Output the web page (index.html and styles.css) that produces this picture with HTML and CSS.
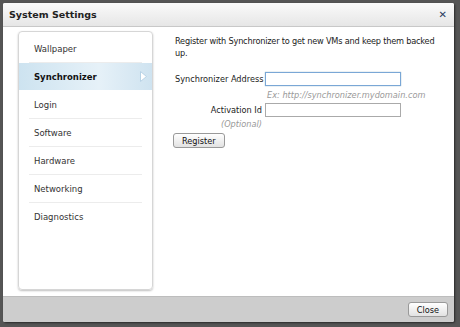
FILE: index.html
```html
<!DOCTYPE html>
<html>
<head>
<meta charset="utf-8">
<link rel="stylesheet" href="styles.css">
</head>
<body>
<div class="dialog">
  <div class="titlebar">
    <span class="title">System Settings</span>
    <span class="close-x">✕</span>
  </div>
  <div class="body">
    <div class="sidebar">
      <div class="item">Wallpaper</div>
      <div class="item active">Synchronizer<svg class="arrow" width="9" height="13" viewBox="0 0 9 13"><path d="M1.5 1.5 L7.5 6.5 L1.5 11.5 Z" fill="#fff" stroke="#b8d3e6" stroke-width="1"/></svg></div>
      <div class="item">Login</div>
      <div class="item">Software</div>
      <div class="item">Hardware</div>
      <div class="item">Networking</div>
      <div class="item last">Diagnostics</div>
    </div>
    <div class="content">
      <p class="intro">Register with Synchronizer to get new VMs and keep them backed up.</p>
      <div class="form">
        <label class="lbl">Synchronizer Address</label>
        <input class="field focus" type="text">
        <span></span>
        <span class="hint">Ex: http://synchronizer.mydomain.com</span>
        <label class="lbl">Activation Id</label>
        <input class="field" type="text">
        <span class="hint right">(Optional)</span>
        <span></span>
      </div>
      <button class="btn register">Register</button>
    </div>
  </div>
  <div class="footer">
    <button class="btn">Close</button>
  </div>
</div>
</body>
</html>
```
FILE: styles.css
```css
html, body { margin: 0; padding: 0; }
body {
  width: 460px; height: 327px;
  background: #555;
  font-family: "DejaVu Sans", Verdana, sans-serif;
  font-size: 8.5px;
  color: #222;
  overflow: hidden;
}
.dialog {
  margin: 3px 0 0 3px;
  width: 451px; height: 319px;
  display: flex; flex-direction: column;
  background: #fff;
  border-radius: 2px;
  box-shadow: 1px 1px 2px rgba(0,0,0,0.5);
}
.titlebar {
  height: 23px;
  display: flex; align-items: center; justify-content: space-between;
  padding: 0 7px 0 6px;
  background: linear-gradient(#fafafa, #e6e6e6);
  border-bottom: 1px solid #c8c8c8;
  border-radius: 2px 2px 0 0;
}
.title { font-weight: bold; font-size: 9.5px; color: #222; }
.close-x { font-weight: bold; font-size: 10px; color: #2a3b5e; }
.body {
  flex: 1;
  display: flex;
  padding: 4px 0 6px 15px;
  gap: 22px;
}
.sidebar {
  width: 133px;
  flex: none;
  border: 1px solid #d6d6d6;
  border-radius: 4px;
  box-shadow: 0 1px 2px rgba(0,0,0,0.25);
  padding-top: 3px;
  display: flex; flex-direction: column;
}
.item {
  height: 27px;
  margin: 0 10px;
  display: flex; align-items: center;
  padding-left: 5px;
  border-bottom: 1px solid #ececec;
  color: #333;
}
.item.last { border-bottom: none; }
.item.active {
  margin: 0;
  padding-left: 15px;
  height: 27px;
  font-weight: bold;
  color: #111;
  background: linear-gradient(90deg, #cde3f0 0%, #e6f1f8 60%, #cfe3f0 100%);
  border-bottom: 1px solid #fff;
  justify-content: space-between;
  padding-right: 4px;
}
.content { flex: 1; padding-top: 4px; font-size: 8.2px; }
.intro { margin: 0 14px 0 0; line-height: 12px; letter-spacing: -0.2px; }
.form {
  margin-top: 13px;
  display: grid;
  grid-template-columns: 87px 136px;
  grid-template-rows: 14px 17px 14px 14px;
  column-gap: 3px;
  align-items: center;
}
.lbl { text-align: right; white-space: nowrap; }
.field {
  height: 14px; box-sizing: border-box;
  border: 1px solid #aaa;
  padding: 0; margin: 0;
  font-size: 9px;
}
.field.focus { border: 1px solid #7aa7d6; box-shadow: 0 0 1px #8ab; }
.hint { font-style: italic; color: #999; padding-left: 2px; white-space: nowrap; }
.hint.right { text-align: right; padding-left: 0; }
.btn {
  font-family: "DejaVu Sans", Verdana, sans-serif;
  font-size: 8.2px;
  height: 15px;
  padding: 0 8px;
  border: 1px solid #999;
  border-radius: 3px;
  background: linear-gradient(#fff, #e2e2e2);
  color: #111;
}
.register { margin-top: 2px; margin-left: -2px; }
.footer {
  height: 25px;
  background: #cdcdcd;
  border-top: 1px solid #bdbdbd;
  display: flex; align-items: center; justify-content: flex-end;
  padding-right: 6px;
  border-radius: 0 0 2px 2px;
}
```
